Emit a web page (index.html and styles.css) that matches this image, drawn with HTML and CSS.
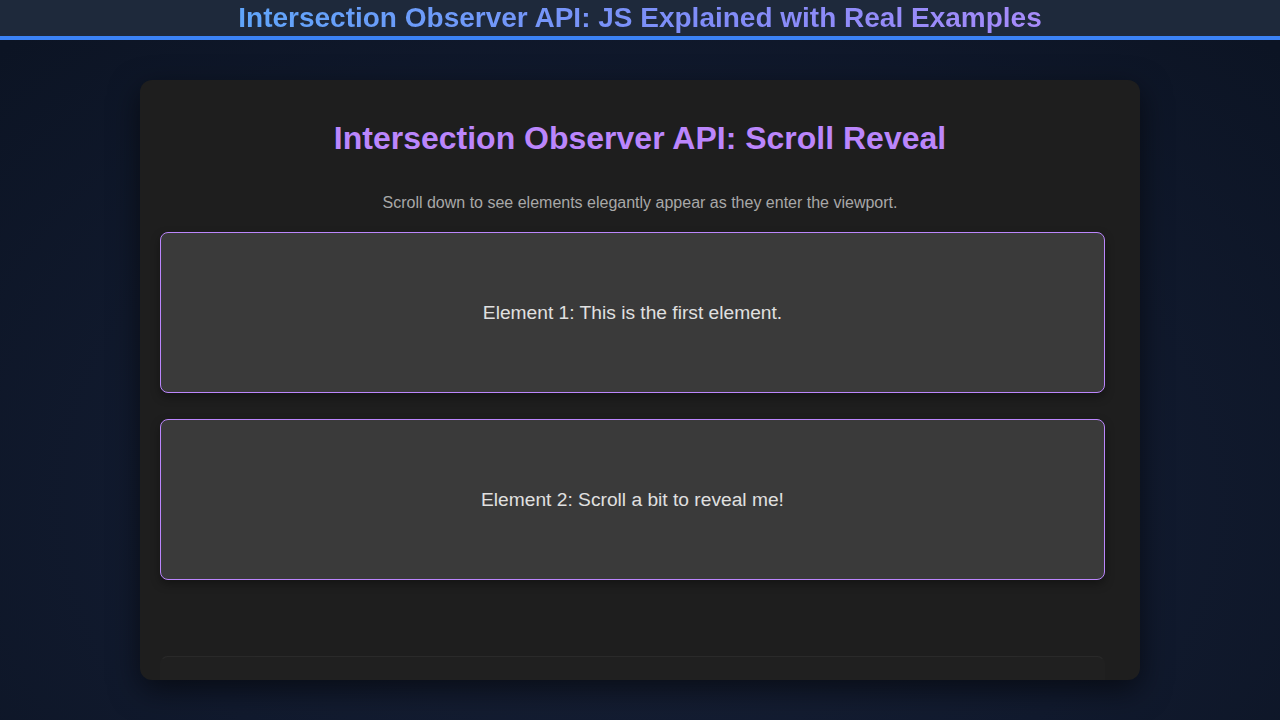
FILE: index.html
```html
<!DOCTYPE html>
<html lang="en">
<head>
<meta charset="utf-8">
<title>Intersection Observer API: JS Explained with Real Examples</title>
<link rel="stylesheet" href="styles.css">
</head>
<body>
  <header class="topbar">
    <h1 class="topbar-title">Intersection Observer API: JS Explained with Real Examples</h1>
  </header>
  <main class="stage">
    <section class="demo">
      <h2 class="demo-title">Intersection Observer API: Scroll Reveal</h2>
      <p class="demo-lead">Scroll down to see elements elegantly appear as they enter the viewport.</p>
      <div class="reveal is-visible">Element 1: This is the first element.</div>
      <div class="reveal is-visible">Element 2: Scroll a bit to reveal me!</div>
      <div class="reveal is-entering"></div>
    </section>
  </main>
</body>
</html>
```
FILE: styles.css
```css
* { box-sizing: border-box; }

html, body {
  margin: 0;
  height: 100%;
}

body {
  font-family: "Liberation Sans", Arial, sans-serif;
  background-color: #0f172a;
  background-image: radial-gradient(ellipse 70% 90% at 50% 70%, #172036 0%, #111a2e 55%, #0c1424 100%);
  overflow: hidden;
}

.topbar {
  height: 40px;
  background: #1e293b;
  border-bottom: 4px solid #3b82f6;
  display: flex;
  justify-content: center;
  align-items: center;
}

.topbar-title {
  margin: 0;
  font-size: 28px;
  font-weight: 700;
  line-height: 36px;
  background: linear-gradient(90deg, #60a5fa 0%, #818cf8 60%, #a78bfa 100%);
  -webkit-background-clip: text;
  background-clip: text;
  color: transparent;
}

.stage {
  display: flex;
  justify-content: center;
  padding-top: 40px;
}

.demo {
  width: 1000px;
  height: 600px;
  background: #1e1e1e;
  border-radius: 12px;
  padding: 20px;
  overflow: hidden;
  box-shadow: 0 10px 30px rgba(0, 0, 0, 0.55);
}

.demo-title {
  margin: 20px 0 37px;
  text-align: center;
  font-size: 32px;
  line-height: 37px;
  font-weight: 700;
  color: #bb86fc;
}

.demo-lead {
  margin: 0 0 20px;
  text-align: center;
  font-size: 16px;
  line-height: 18px;
  color: #a8a8a8;
}

.reveal {
  height: 161px;
  margin: 0 15px 26px 0;
  display: flex;
  align-items: center;
  justify-content: center;
  background: #3a3a3a;
  border: 1px solid #bb86fc;
  border-radius: 8px;
  color: #e0e0e0;
  font-size: 19.2px;
  box-shadow: 0 4px 10px rgba(0, 0, 0, 0.35);
  opacity: 0;
  transform: translateY(50px);
}

.reveal.is-visible {
  opacity: 1;
  transform: none;
}

/* next block, just starting its fade-in */
.reveal.is-entering {
  opacity: 0.1;
  border-color: transparent;
  border-top-color: #909090;
  box-shadow: none;
}
```
